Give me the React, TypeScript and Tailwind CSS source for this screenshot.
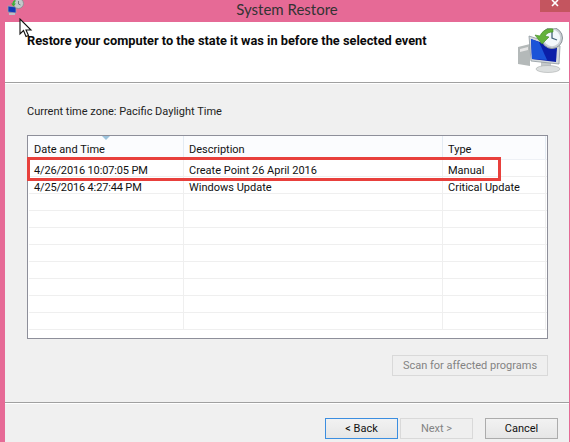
const font = { fontFamily: 'Roboto, "Noto Sans", sans-serif' };

const rows = [
  ["4/26/2016 10:07:05 PM", "Create Point 26 April 2016", "Manual"],
  ["4/25/2016 4:27:44 PM", "Windows Update", "Critical Update"],
  ["", "", ""],
  ["", "", ""],
  ["", "", ""],
  ["", "", ""],
  ["", "", ""],
  ["", "", ""],
  ["", "", ""],
  ["", "", ""],
];

function SmallIcon() {
  return (
    <svg width="17" height="15" viewBox="0 0 17 15">
      <path d="M1 6l8 1v6l-8-1z" fill="#1238b8" stroke="#9aa3ad" strokeWidth="0.8" />
      <path d="M2 13h6v2h-6z" fill="#b9c0c6" />
      <circle cx="11.5" cy="3.5" r="5" fill="#c3c8cb" stroke="#858c90" strokeWidth="0.8" />
      <path d="M11.5 1v3l2 1" fill="none" stroke="#5c6870" strokeWidth="0.8" />
      <path d="M8 0C6 1 5.5 2 5.5 3.5l-1.5 0 2.5 3 2.5-3h-1.5c0-1 .5-2 1.5-2.5z" fill="#3fae3a" />
    </svg>
  );
}

function RestoreIcon({ size }: { size: number }) {
  return (
    <svg width={size} height={size} viewBox="0 0 48 48">
      <path d="M1 19l12-3v22l-12-2z" fill="#b4b9b9" />
      <path d="M3 21l8-2v3l-8 2z" fill="#e6e6e6" />
      <path d="M24 33h10v6h-10z" fill="#c4c8ca" />
      <ellipse cx="31" cy="41" rx="12" ry="3.5" fill="#dcdfdf" stroke="#a9adad" strokeWidth="0.6" />
      <path d="M12 8l31 10-1 18-28-3z" fill="#d4d9dc" stroke="#8f989e" strokeWidth="0.8" />
      <path d="M14 11l26 9-1 14-24-3z" fill="#0b1fa8" />
      <path d="M14 11l8 3 8 18-15-1z" fill="#1b54d8" />
      <circle cx="35" cy="10" r="10.5" fill="#c9cfd4" stroke="#8c959b" />
      <circle cx="35" cy="10" r="8.2" fill="#f3f8fb" />
      <path d="M35 4v6l5 2" fill="none" stroke="#47657c" strokeWidth="1.3" />
      <path d="M36 1C30 0 25 3 23 8l-5-1 7 9 7-7-4-1c2-3 4-4 8-4z" fill="#63b23a" stroke="#3e8a24" strokeWidth="0.6" />
    </svg>
  );
}

export default function App() {
  return (
    <div className="relative w-[570px] h-[442px] overflow-hidden bg-[#e66a96] text-[11px] text-[#111]" style={font}>
      <div className="h-[22px] flex items-start justify-between relative">
        <div className="pl-[7px]">
          <SmallIcon />
        </div>
        <div className="absolute left-0 right-0 top-[-2px] text-center text-[#333] pl-[4px] font-['Lato'] text-[15px]">System Restore</div>
        <div className="w-[30px] h-[12px] bg-[#c4555f] flex justify-center">
          <svg width="8" height="7" viewBox="0 0 8 7">
            <path d="M1 0l6 6M7 0l-6 6" stroke="#fff" strokeWidth="1.6" fill="none" />
          </svg>
        </div>
      </div>

      <div className="ml-[5px] mr-px h-[420px] bg-[#f0f0f0] flex flex-col">
        <div className="h-[61px] bg-white border-b border-[#a0a0a0] flex justify-between shrink-0">
          <div className="pl-[22px] pt-[9px] font-bold text-[12.8px] text-[#0b0b0b]">Restore your computer to the state it was in before the selected event</div>
          <div className="pr-[4px] pt-[6px]"><RestoreIcon size={48} /></div>
        </div>
        <div className="h-px bg-white shrink-0" />

        <div className="pl-[22px] pt-[20px] h-[51px] shrink-0 text-[#222]">Current time zone: Pacific Daylight Time</div>

        <div className="ml-[22px] w-[521px] h-[204px] bg-white border border-[#8e8f9a] shrink-0 flex flex-col relative">
          <div className="absolute left-[74px] top-0 w-0 h-0 border-l-[4px] border-r-[4px] border-t-[4px] border-l-transparent border-r-transparent border-t-[#9cc3dc]" />
          <div className="h-[24px] flex border-b border-[#eef1f6] bg-[#fbfcfe] shrink-0">
            <div className="w-[156px] pl-[6px] pt-[6px] border-r border-[#e4ebf3]">Date and Time</div>
            <div className="w-[259px] pl-[5px] pt-[6px] border-r border-[#e4ebf3]">Description</div>
            <div className="w-[103px] pl-[5px] pt-[6px] border-r border-[#e4ebf3]">Type</div>
          </div>
          {rows.map((r, i) => (
            <div key={i} className="h-[17px] flex border-b border-[#efefef] shrink-0 leading-[21px] ml-px">
              <div className="w-[155px] pl-[5px] border-r border-[#efefef] whitespace-nowrap tracking-[-0.15px]">{r[0]}</div>
              <div className="w-[259px] pl-[5px] border-r border-[#efefef] whitespace-nowrap">{r[1]}</div>
              <div className="w-[103px] pl-[5px] border-r border-[#efefef] whitespace-nowrap">{r[2]}</div>
            </div>
          ))}
        </div>

        <div className="flex justify-end pr-[21px] pt-[16px] h-[63px] shrink-0">
          <button className="w-[156px] h-[21px] border border-[#d9d9d9] bg-[#efefef] text-[#838383] text-[11px] leading-none">Scan for affected programs</button>
        </div>

        <div className="h-px bg-[#a0a0a0] shrink-0" />
        <div className="h-px bg-white shrink-0" />

        <div className="flex pl-[320px] pt-[14px] gap-[2px]">
          <button className="w-[73px] h-[21px] border border-[#3c8ee0] bg-gradient-to-b from-[#f2f2f2] to-[#e6e6e6] text-[11px] leading-none">&lt; Back</button>
          <button className="w-[73px] h-[21px] border border-[#d9d9d9] bg-[#efefef] text-[#838383] text-[11px] leading-none">Next &gt;</button>
          <button className="ml-[10px] w-[73px] h-[21px] border border-[#acacac] bg-gradient-to-b from-[#f2f2f2] to-[#e6e6e6] text-[11px] leading-none">Cancel</button>
        </div>
      </div>

      <div className="absolute left-[27px] top-[157px] w-[474px] h-[24px] border-[3px] border-[#e8403c]" />

      <svg className="absolute left-[19px] top-[18px]" width="14" height="20" viewBox="0 0 14 20">
        <path d="M1 1v15l3.5-3.5 2.5 6 2.5-1-2.5-5.5h5z" fill="#fff" stroke="#111" strokeWidth="1.1" />
      </svg>
    </div>
  );
}
